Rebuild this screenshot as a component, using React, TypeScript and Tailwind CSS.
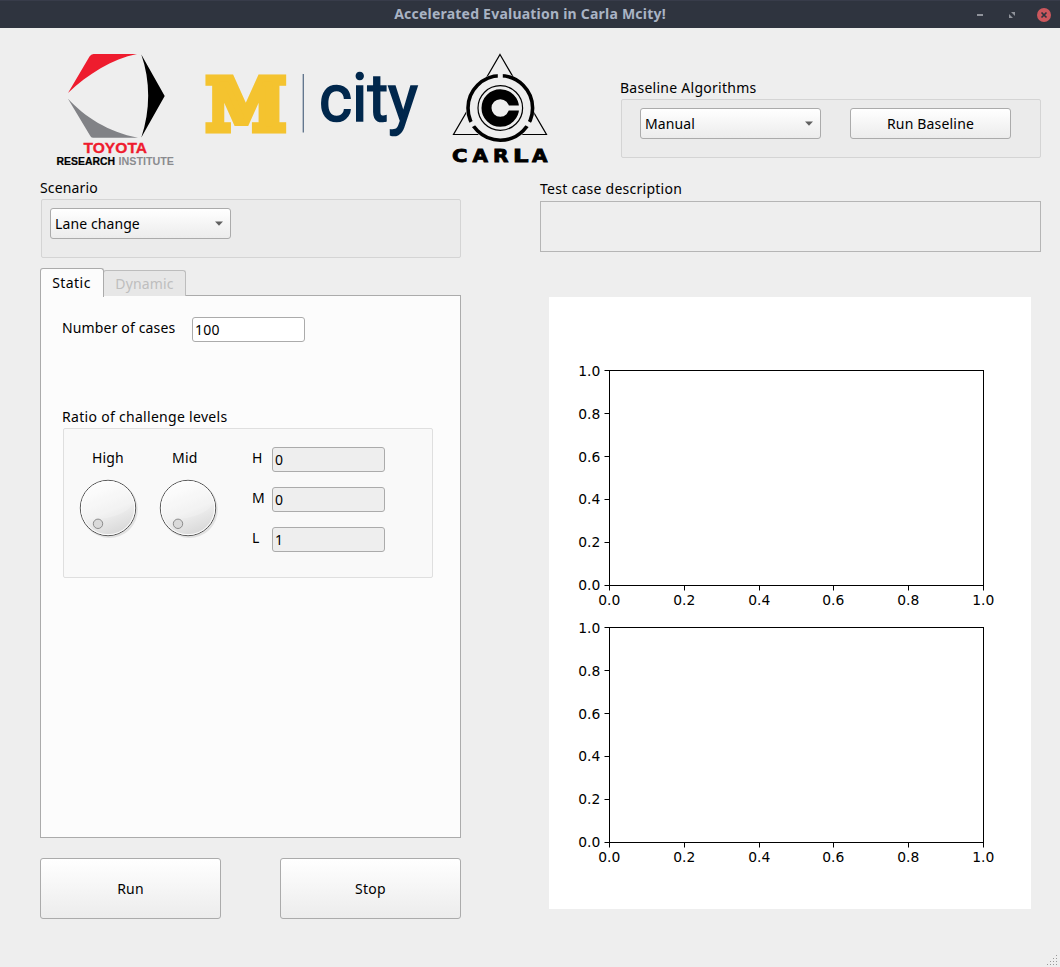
import type { ReactNode } from "react";

const ticks = [0, 0.2, 0.4, 0.6, 0.8, 1];

const carlaLetters = [
  { char: "C", x: 452 },
  { char: "A", x: 472.5 },
  { char: "R", x: 493 },
  { char: "L", x: 513 },
  { char: "A", x: 532 },
];

function ToyotaLogo() {
  return (
    <svg width="130" height="120" viewBox="50 50 130 120" className="shrink-0">
      <path d="M92 54 H137 C112 59 88 74 68 93 L89.500 56.500 Q91 54 93.500 54 Z" fill="#ee1c2e" />
      <path d="M141.300 54.500 L164.700 96 L141.300 137.500 C150.500 110 150.500 81 141.300 54.500 Z" fill="#000" />
      <path d="M67.800 98.500 C85 117 108 132 138 137.700 H93 Q91 137.700 90 135.500 Z" fill="#818286" />
      <text x="83.500" y="152.800" textLength="63.500" lengthAdjust="spacingAndGlyphs" fill="#ee1c2e" stroke="#ee1c2e" strokeWidth="0.300" className="font-['Liberation_Sans'] text-[14.500px] font-bold">TOYOTA</text>
      <text x="56.500" y="164.600" textLength="58.500" lengthAdjust="spacingAndGlyphs" fill="#000" stroke="#000" strokeWidth="0.200" className="font-['Liberation_Sans'] text-[10px] font-bold">RESEARCH</text>
      <text x="118.500" y="164.600" textLength="55.500" lengthAdjust="spacingAndGlyphs" fill="#8a8b8e" className="font-['Liberation_Sans'] text-[10px] font-bold">INSTITUTE</text>
    </svg>
  );
}

function McityLogo() {
  return (
    <svg width="230" height="100" viewBox="195 55 230 100" className="shrink-0">
      <text x="206" y="129.500" textLength="80" lengthAdjust="spacingAndGlyphs" fill="#f4c32f" stroke="#f4c32f" strokeWidth="7" strokeLinejoin="miter" className="font-['DejaVu_Serif'] text-[71px] font-bold">M</text>
      <path d="M303.300 74 V132.500" stroke="#5b7088" strokeWidth="1.300" />
      <text x="319" y="121" textLength="99" lengthAdjust="spacingAndGlyphs" fill="#00274c" stroke="#00274c" strokeWidth="1.700" className="font-['Roboto'] text-[66px] font-normal">city</text>
    </svg>
  );
}

function CarlaLogo() {
  return (
    <svg width="110" height="120" viewBox="445 50 110 120" className="shrink-0">
      <path d="M500 54.500 L546.500 134.500 H453.500 Z" fill="none" stroke="#000" strokeWidth="1.200" />
      <circle cx="500.300" cy="108" r="34.500" fill="#eee" />
      <circle cx="500.300" cy="108" r="32.300" fill="none" stroke="#000" strokeWidth="3.600" />
      <path d="M500.300 108 V70 M500.300 108 L467 127.200 M500.300 108 L533.600 127.200" stroke="#eee" strokeWidth="5" />
      <circle cx="500.300" cy="108" r="22.300" fill="#eee" stroke="#000" strokeWidth="1.200" />
      <circle cx="500.300" cy="108" r="13.800" fill="none" stroke="#000" strokeWidth="10" />
      <rect x="506" y="105.500" width="15" height="5" fill="#eee" />
      {carlaLetters.map(({ char, x }) => (
        <text key={x} x={x} y="162" textLength="15.500" lengthAdjust="spacingAndGlyphs" fill="#000" stroke="#000" strokeWidth="0.800" className="font-['DejaVu_Sans'] text-[17px] font-bold">{char}</text>
      ))}
    </svg>
  );
}

function GroupBox({ className, children }: { className: string; children?: ReactNode }) {
  return <div className={`rounded-[2px] border ${className}`}>{children}</div>;
}

function Button({ className, children }: { className: string; children: ReactNode }) {
  return (
    <button className={`rounded-[3px] border border-[#ababab] bg-linear-to-b from-white to-[#ececec] text-center ${className}`}>
      {children}
    </button>
  );
}

function Combo({ children }: { children: ReactNode }) {
  return (
    <button className="flex h-[31px] w-[181px] items-center justify-between rounded-[3px] border border-[#ababab] bg-linear-to-b from-white to-[#ececec] pr-[7px] pl-1 text-left">
      <span className="tracking-[0.1px]">{children}</span>
      <svg width="8" height="5" viewBox="0 0 8 5"><path d="M0 0.500 H8 L4 4.700 Z" fill="#606060" /></svg>
    </button>
  );
}

function Dial({ id }: { id: string }) {
  return (
    <svg width="62" height="62" viewBox="0 0 62 62">
      <defs>
        <linearGradient id={id} x1="0.300" y1="0" x2="0.700" y2="1">
          <stop offset="0" stopColor="#fff" />
          <stop offset="0.550" stopColor="#f0f0f0" />
          <stop offset="1" stopColor="#d6d6d6" />
        </linearGradient>
      </defs>
      <circle cx="32.300" cy="32.500" r="28.500" fill="#d9d9d9" opacity="0.700" />
      <circle cx="31" cy="31" r="27.700" fill={`url(#${id})`} stroke="#555" strokeWidth="1" />
      <circle cx="31" cy="31" r="26.700" fill="none" stroke="#fff" strokeWidth="1" />
      <path d="M5 33 C5 16 16 5 31 5 C44 5 55 13 57 25 C50 37 36 42 9 43 Z" fill="#fff" opacity="0.200" />
      <circle cx="21" cy="46.800" r="4.700" fill="#dadada" stroke="#8c8c8c" strokeWidth="1" />
    </svg>
  );
}

function Field({ name, value }: { name: string; value: string }) {
  return (
    <div className="flex h-10 items-start">
      <span className="h-[22px] w-5 leading-[22px]">{name}</span>
      <div className="h-[25px] w-[113px] rounded-[3px] border border-[#ababab] bg-[#eee] pl-[2px] leading-[23px]">{value}</div>
    </div>
  );
}

function Axes({ top, bottom }: { top: number; bottom: number }) {
  const left = 60.5;
  const right = 434.5;
  return (
    <g>
      <rect x={left} y={top} width={right - left} height={bottom - top} fill="none" stroke="#000" />
      {ticks.map((t) => {
        const x = Math.floor(left + t * (right - left)) + 0.5;
        const y = Math.floor(bottom - t * (bottom - top)) + 0.5;
        return (
          <g key={t}>
            <path d={`M${x} ${bottom} v5 M${left} ${y} h-5`} stroke="#000" />
            <text x={x - 0.2} y={bottom + 19.5} textAnchor="middle">{t.toFixed(1)}</text>
            <text x="51.300" y={t < 0.5 ? y + 4.4 : y + 5} textAnchor="end">{t.toFixed(1)}</text>
          </g>
        );
      })}
    </g>
  );
}

function Grip() {
  const dots = [[3, 0], [2, 1], [3, 1], [1, 2], [2, 2], [3, 2], [0, 3], [1, 3], [2, 3], [3, 3]];
  return (
    <svg width="12" height="12" viewBox="0 0 12 12">
      {dots.map(([x, y]) => <rect key={`${x}-${y}`} x={x * 3} y={y * 3} width="1" height="1" fill="#999" />)}
    </svg>
  );
}

export default function App() {
  return (
    <div className="flex h-[967px] w-[1060px] flex-col overflow-hidden bg-[#eee] font-['Noto_Sans',sans-serif] text-[14px] leading-5 text-black">
      <header className="grid h-7 shrink-0 grid-cols-[1fr_auto_1fr] items-center border-t border-[#383c4a] bg-[#2f343f]">
        <span />
        <h1 className="-mt-[2px] text-[14px] font-bold tracking-[0.220px] text-[#a9b3c4]">Accelerated Evaluation in Carla Mcity!</h1>
        <div className="flex items-center justify-end gap-[26px] pr-[9px]">
          <svg width="6" height="2"><rect width="6" height="2" fill="#90939b" /></svg>
          <svg width="6" height="6"><path d="M2 0 H6 V4 Z M0 2 L4 6 H0 Z" fill="#90939b" /></svg>
          <svg width="14" height="14" viewBox="0 0 14 14" className="-ml-1">
            <circle cx="7" cy="7" r="7" fill="#cc575d" />
            <path d="M4.500 4.500 L9.500 9.500 M9.500 4.500 L4.500 9.500" stroke="#2f343f" strokeWidth="1.700" />
          </svg>
        </div>
      </header>

      <section className="flex h-[150px] shrink-0 items-start pl-[50px]">
        <div className="pt-[22px]"><ToyotaLogo /></div>
        <div className="pt-[27px] pl-[15px]"><McityLogo /></div>
        <div className="pt-[22px] pl-5"><CarlaLogo /></div>
        <div className="pt-[50px] pl-[65px]">
          <div className="h-[21px] tracking-[0.260px]">Baseline Algorithms</div>
          <GroupBox className="ml-px flex h-[59px] w-[420px] gap-[29px] border-[#d4d4d4] bg-[#ebebeb] pt-2 pl-[18px]">
            <Combo>Manual</Combo>
            <Button className="h-[31px] w-[161px] tracking-[0.180px]">Run Baseline</Button>
          </GroupBox>
        </div>
      </section>

      <main className="flex flex-1 gap-[79px] pl-10">
        <section className="w-[421px]">
          <div className="h-[21px] tracking-[0.160px]">Scenario</div>
          <GroupBox className="ml-px h-[59px] border-[#d4d4d4] bg-[#ebebeb] pt-2 pl-2">
            <Combo>Lane change</Combo>
          </GroupBox>
          <div className="mt-[10px] flex h-7 items-end">
            <div className="z-10 -mb-px h-[29px] w-16 rounded-t-[3px] border border-b-0 border-[#ababab] bg-[#fcfcfc] pt-1 pr-px text-center tracking-[0.450px]">Static</div>
            <div className="-ml-px h-[26px] w-[83px] rounded-t-[3px] border border-b-0 border-[#bdbdbd] bg-[#e7e7e7] pt-[3px] text-center tracking-[0.150px] text-[#bebebe]">Dynamic</div>
          </div>
          <div className="-mt-px h-[543px] border border-[#ababab] bg-[#fcfcfc] pt-[21px] pl-[21px]">
            <div className="flex h-[89px] items-start">
              <span className="w-[130px] leading-[22px] tracking-[0.150px]">Number of cases</span>
              <div className="h-[25px] w-[113px] rounded-[3px] border border-[#ababab] bg-white pl-[2px] leading-[23px] tracking-[0.200px]">100</div>
            </div>
            <div className="h-[22px] pt-px tracking-[0.300px]">Ratio of challenge levels</div>
            <GroupBox className="ml-px flex h-[150px] w-[370px] border-[#dfdfdf] bg-[#f9f9f9] pt-[18px] pl-[13px]">
              <div className="flex w-20 flex-col">
                <span className="pl-[15px] leading-[22px] tracking-[0.100px]">High</span>
                <div className="pt-2"><Dial id="dial-high" /></div>
              </div>
              <div className="flex w-[95px] flex-col">
                <span className="pl-[15px] leading-[22px] tracking-[0.200px]">Mid</span>
                <div className="pt-2"><Dial id="dial-mid" /></div>
              </div>
              <div>
                <Field name="H" value="0" />
                <Field name="M" value="0" />
                <Field name="L" value="1" />
              </div>
            </GroupBox>
          </div>
          <div className="mt-5 flex gap-[59px]">
            <Button className="h-[61px] w-[181px] tracking-[0.200px]">Run</Button>
            <Button className="h-[61px] w-[181px] tracking-[0.300px]">Stop</Button>
          </div>
        </section>

        <section className="flex w-[520px] flex-col">
          <div className="h-[23px] pt-px tracking-[0.260px]">Test case description</div>
          <div className="h-[51px] w-[501px] border border-[#b5b5b5] bg-[#eee]" />
          <svg width="482" height="612" viewBox="0 0 482 612" className="mt-[45px] ml-[9px] bg-white font-['DejaVu_Sans'] text-[13.890px]">
            <Axes top={73.5} bottom={288.5} />
            <Axes top={330.5} bottom={545.5} />
          </svg>
          <div className="mt-auto self-end pr-px"><Grip /></div>
        </section>
      </main>
    </div>
  );
}
